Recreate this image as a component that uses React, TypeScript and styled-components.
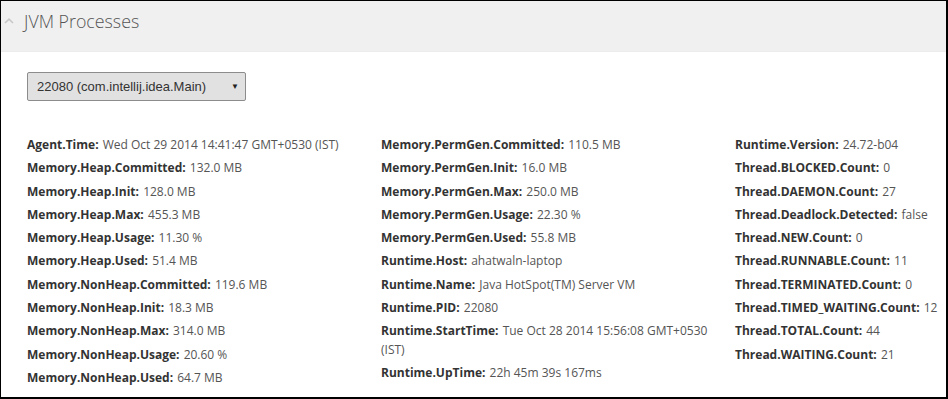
import React from "react";
import styled, { createGlobalStyle } from "styled-components";

const Global = createGlobalStyle`
  html, body { margin: 0; padding: 0; background: #fff; }
  body { font-family: "Open Sans", "Liberation Sans", sans-serif; }
`;

const Frame = styled.div`
  box-sizing: border-box;
  width: 948px;
  height: 399px;
  border-style: solid;
  border-color: #000;
  border-width: 1px 2px 2px 1px;
  overflow: hidden;
  background: #fff;
`;

const Header = styled.div`
  height: 51px;
  background: #f0f0f0;
  display: flex;
  align-items: center;
  padding-left: 3px;
  gap: 10px;
  border-bottom: 1px solid #ececec;
  box-sizing: border-box;
`;

const Title = styled.h2`
  margin: 0;
  font-family: "Open Sans", sans-serif;
  font-weight: 300;
  font-size: 17.8px;
  color: #555;
  line-height: 1;
  position: relative;
  top: -4px;
`;

const Chevron = styled.svg`
  width: 10px;
  height: 6px;
  position: relative;
  top: -5px;
`;

const Body = styled.div`
  padding: 20px 0 0 26px;
`;

const SelectBox = styled.div`
  box-sizing: border-box;
  width: 219px;
  height: 29px;
  border: 1px solid #8c8c8c;
  border-radius: 2px;
  background: #e1e1e1;
  display: flex;
  align-items: center;
  justify-content: space-between;
  padding: 0 6px 0 9px;
  font-family: "Liberation Sans", Arial, sans-serif;
  font-size: 13px;
  color: #333;
`;

const Arrow = styled.span`
  font-size: 8px;
  color: #222;
`;

const Grid = styled.div`
  display: grid;
  grid-template-columns: repeat(3, 338px);
  column-gap: 16px;
  margin-top: 35px;
  width: 1046px;
`;

const Column = styled.div`
  display: flex;
  flex-direction: column;
`;

const Row = styled.div<{ $nowrap?: boolean }>`
  font-size: 12px;
  line-height: 18.3px;
  margin-bottom: 5px;
  color: #555;
  white-space: ${(p) => (p.$nowrap ? "nowrap" : "normal")};
`;

const Label = styled.b`
  font-weight: 700;
  color: #333;
  margin-right: 1px;
`;

type Item = [string, string];

const col1: Item[] = [
  ["Agent.Time", "Wed Oct 29 2014 14:41:47 GMT+0530 (IST)"],
  ["Memory.Heap.Committed", "132.0 MB"],
  ["Memory.Heap.Init", "128.0 MB"],
  ["Memory.Heap.Max", "455.3 MB"],
  ["Memory.Heap.Usage", "11.30 %"],
  ["Memory.Heap.Used", "51.4 MB"],
  ["Memory.NonHeap.Committed", "119.6 MB"],
  ["Memory.NonHeap.Init", "18.3 MB"],
  ["Memory.NonHeap.Max", "314.0 MB"],
  ["Memory.NonHeap.Usage", "20.60 %"],
  ["Memory.NonHeap.Used", "64.7 MB"],
];

const col2: Item[] = [
  ["Memory.PermGen.Committed", "110.5 MB"],
  ["Memory.PermGen.Init", "16.0 MB"],
  ["Memory.PermGen.Max", "250.0 MB"],
  ["Memory.PermGen.Usage", "22.30 %"],
  ["Memory.PermGen.Used", "55.8 MB"],
  ["Runtime.Host", "ahatwaln-laptop"],
  ["Runtime.Name", "Java HotSpot(TM) Server VM"],
  ["Runtime.PID", "22080"],
  ["Runtime.StartTime", "Tue Oct 28 2014 15:56:08 GMT+0530 (IST)"],
  ["Runtime.UpTime", "22h 45m 39s 167ms"],
];

const col3: Item[] = [
  ["Runtime.Version", "24.72-b04"],
  ["Thread.BLOCKED.Count", "0"],
  ["Thread.DAEMON.Count", "27"],
  ["Thread.Deadlock.Detected", "false"],
  ["Thread.NEW.Count", "0"],
  ["Thread.RUNNABLE.Count", "11"],
  ["Thread.TERMINATED.Count", "0"],
  ["Thread.TIMED_WAITING.Count", "12"],
  ["Thread.TOTAL.Count", "44"],
  ["Thread.WAITING.Count", "21"],
];

const renderCol = (items: Item[], nowrap?: boolean) => (
  <Column>
    {items.map(([k, v]) => (
      <Row key={k} $nowrap={nowrap}>
        <Label>{k}:</Label> {v}
      </Row>
    ))}
  </Column>
);

export default function App() {
  return (
    <>
      <Global />
      <Frame>
        <Header>
          <Chevron viewBox="0 0 10 6">
            <polyline points="1,5 5,1.2 9,5" fill="none" stroke="#c8c8c8" strokeWidth="1.6" />
          </Chevron>
          <Title>JVM Processes</Title>
        </Header>
        <Body>
          <SelectBox>
            <span>22080 (com.intellij.idea.Main)</span>
            <Arrow>▼</Arrow>
          </SelectBox>
          <Grid>
            {renderCol(col1)}
            {renderCol(col2)}
            {renderCol(col3, true)}
          </Grid>
        </Body>
      </Frame>
    </>
  );
}
